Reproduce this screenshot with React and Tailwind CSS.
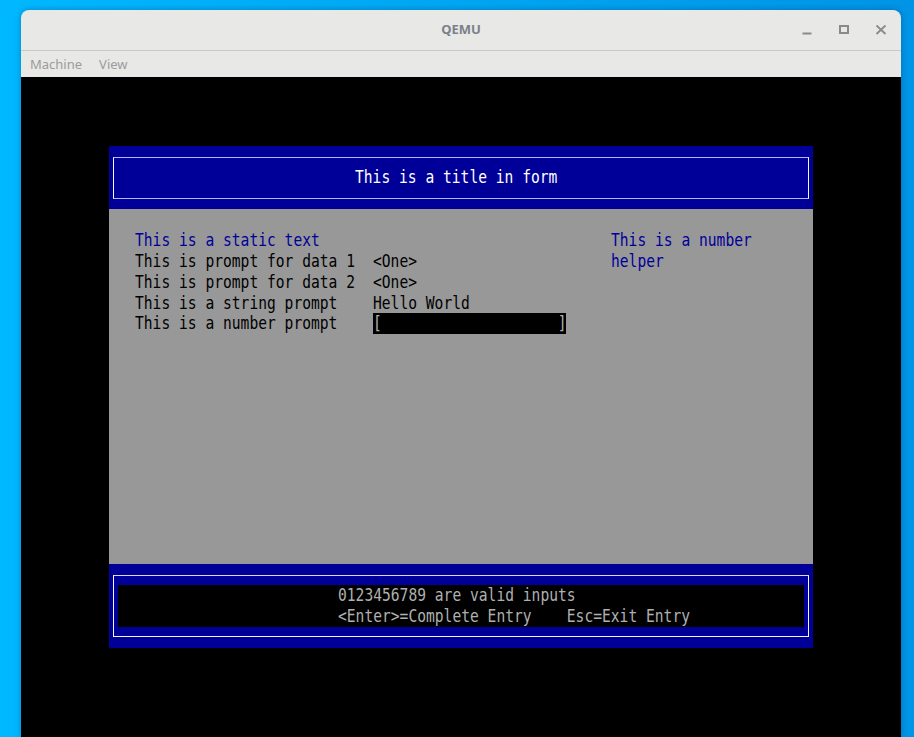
export default function App() {
  return (
    <div className="h-[737px] overflow-hidden bg-linear-to-r from-[#00b8ff] to-[#0094e6] pt-[10px] pl-[21px]">
      <div className="w-[880px] rounded-t-[8px] bg-[#e8e8e7] shadow-[0_0_6px_rgba(0,40,90,0.35)] overflow-hidden">
        <TitleBar />

        <div className="h-[26px] flex items-center gap-[17px] px-[9px] pt-[2px] text-[13px] text-[#9c9c9c] font-['Noto_Sans',sans-serif]">
          <span>Machine</span>
          <span>View</span>
        </div>

        <div className="bg-black h-[660px] pt-[6.6px]">
          <Screen />
        </div>
      </div>
    </div>
  );
}

function TitleBar() {
  return (
    <div className="h-[41px] grid grid-cols-[1fr_auto_1fr] items-center border-b border-[#c9c9c9]">
      <div />
      <span className="text-[13px] font-bold text-[#7b8089] font-['Noto_Sans',sans-serif]">
        QEMU
      </span>
      <div className="flex justify-end items-center gap-[25px] pr-[14px] text-[#8a8a8a]">
        <svg width="12" height="12" viewBox="0 0 12 12">
          <path d="M1.5 9.5h9" stroke="currentColor" strokeWidth="2" />
        </svg>
        <svg width="12" height="12" viewBox="0 0 12 12">
          <rect x="2" y="2" width="8" height="7" fill="none" stroke="currentColor" strokeWidth="2" />
        </svg>
        <svg width="12" height="12" viewBox="0 0 12 12">
          <path d="M1.5 1.5l9 8.5M10.5 1.5l-9 8.5" stroke="currentColor" strokeWidth="1.8" />
        </svg>
      </div>
    </div>
  );
}

function T({ children, className = "" }) {
  return (
    <div
      className={`h-[20.9px] leading-[20.9px] whitespace-pre origin-left scale-x-[0.812] font-['DejaVu_Sans_Mono',monospace] text-[18px] ${className}`}
    >
      {children}
    </div>
  );
}

function Screen() {
  const rows = [
    ["This is prompt for data 1", "<One>"],
    ["This is prompt for data 2", "<One>"],
    ["This is a string prompt", "Hello World"],
  ];

  return (
    <div className="ml-[88px] mt-[62.7px] w-[704px] bg-[#000098]">
      {/* title box */}
      <div className="h-[62.7px] px-[4.4px] py-[10.45px]">
        <div className="h-full border border-[#f4f4ff] border-t-[#b4b4ff] border-b-[#b4b4ff] pt-[9.45px] pl-[241px]">
          <T className="text-white">This is a title in form</T>
        </div>
      </div>

      {/* body */}
      <div className="h-[355.3px] bg-[#989898] pt-[20.9px] flex">
        <div className="w-[501.6px] pl-[26px]">
          <T className="text-[#000098]">This is a static text</T>
          {rows.map(([label, value]) => (
            <div key={label} className="flex">
              <div className="w-[237.6px]">
                <T className="text-black">{label}</T>
              </div>
              <T className="text-black">{value}</T>
            </div>
          ))}
          <div className="flex">
            <div className="w-[237.6px]">
              <T className="text-black">This is a number prompt</T>
            </div>
            <div className="w-[193.6px] bg-black">
              <T className="text-[#b0b0b0]">{"[                    ]"}</T>
            </div>
          </div>
        </div>
        <div>
          <T className="text-[#000098]">This is a number</T>
          <T className="text-[#000098]">helper</T>
        </div>
      </div>

      {/* help box */}
      <div className="h-[83.6px] px-[4.4px] py-[10.45px]">
        <div className="h-full border border-[#f4f4ff] border-t-[#d8d8ff] border-b-[#f4f4ff] px-[3.4px] py-[9.45px]">
          <div className="h-[41.8px] bg-black pl-[220px]">
            <T className="text-[#b0b0b0]">0123456789 are valid inputs</T>
            <T className="text-[#b0b0b0]">{"<Enter>=Complete Entry    Esc=Exit Entry"}</T>
          </div>
        </div>
      </div>
    </div>
  );
}
